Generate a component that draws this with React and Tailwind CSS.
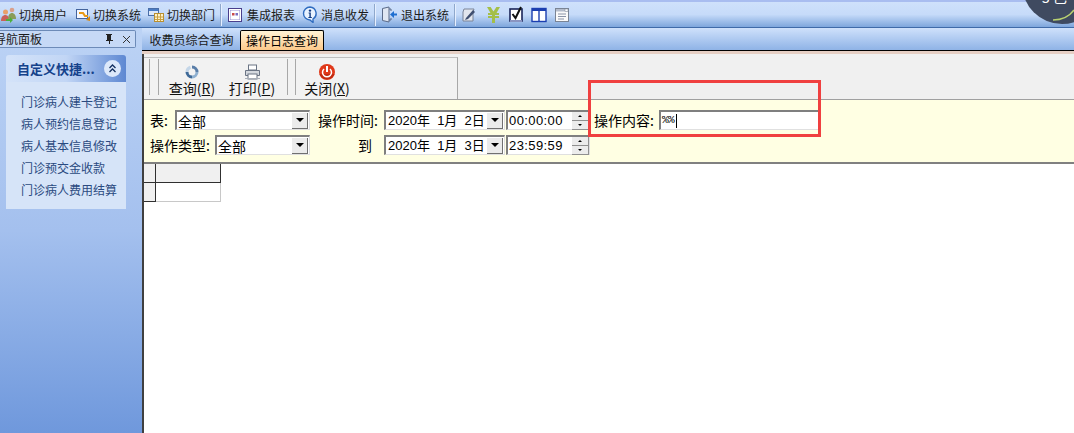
import React from "react";

const font = { fontFamily: '"Noto Sans CJK SC", "Liberation Sans", sans-serif' };

const Users = () => (
  <svg width="16" height="18" viewBox="0 0 16 18"><circle cx="4.500" cy="6" r="2.500" fill="#e8a06a"/><circle cx="11" cy="4" r="2.300" fill="#d9a08c"/><path d="M0 15c0-4 2-6 4.500-6S8 11 8 15z" fill="#c9605a"/><path d="M7 13c0-4 2-6 4-6s4 2 4 6z" fill="#8a9c5a"/><path d="M5 13h4v-2l3 3-3 3v-2H5z" fill="#4caf3c"/></svg>
);
const SwitchSys = () => (
  <svg width="16" height="16" viewBox="0 0 16 16"><rect x="1.500" y="2.500" width="11" height="9" fill="#f5f8ff" stroke="#44649c"/><path d="M4 6h4l2 3h3" fill="none" stroke="#e89a18" strokeWidth="2.200"/><path d="M11 13l4-4v5z" fill="#d88a10"/></svg>
);
const Dept = () => (
  <svg width="17" height="16" viewBox="0 0 17 16"><rect x="0.500" y="1.500" width="10" height="7" fill="#dce8fa" stroke="#4a6ea8"/><rect x="1" y="2" width="9" height="2" fill="#4a7cc4"/><rect x="6.500" y="6.500" width="9" height="8" fill="#fff2c8" stroke="#b98f30"/><path d="M9.500 7v7M12.500 7v7M7 10h8M7 12.500h8" stroke="#c9a040"/></svg>
);
const Report = () => (
  <svg width="16" height="16" viewBox="0 0 16 16"><rect x="1.500" y="1.500" width="13" height="13" fill="#fff" stroke="#4a3f8c"/><path d="M3.500 3.500h9M3.500 12.500h9M3.500 3.500v9M12.500 3.500v9" stroke="#9a8fd0" strokeDasharray="1 1"/><rect x="5" y="6" width="2.500" height="2.500" fill="#c94a4a"/><rect x="8.500" y="6" width="2.500" height="2.500" fill="#7a6cc0"/></svg>
);
const Info = () => (
  <svg width="16" height="17" viewBox="0 0 16 17"><path d="M8 1a6.500 6.500 0 1 0 0 13l3 2.500V13A6.500 6.500 0 0 0 8 1z" fill="#e8f2ff" stroke="#2f6cc0" strokeWidth="1.400"/><circle cx="8" cy="4.600" r="1.200" fill="#123a80"/><path d="M6.600 6.600h2.200v4.400h1v1H6.400v-1h1V7.600h-.8z" fill="#123a80"/></svg>
);
const Logout = () => (
  <svg width="17" height="17" viewBox="0 0 17 17"><path d="M1.500 2.500L8 1v15l-6.500-1.500z" fill="#dfe6f2" stroke="#5a6a88"/><path d="M8 3h2v2M8 14h2v-2" fill="none" stroke="#5a6a88"/><path d="M16 7.500h-3V5l-4 3.500 4 3.500V9.500h3z" fill="#1f6fd0"/></svg>
);
const Note = () => (
  <svg width="16" height="16" viewBox="0 0 16 16"><path d="M3 2h10l-1 3v9H2V5z" fill="#e2e6ee" stroke="#7a8498"/><path d="M5 11l7-8 2 2-7 7-3 1z" fill="#3f4f70"/></svg>
);
const Yen = () => (
  <svg width="13" height="16" viewBox="0 0 13 16"><path d="M0 0h3.600l2.900 4.500L9.400 0H13L9.500 6H12v2H8v1h4v2H8v5H5v-5H1V9h4V8H1V6h2.500z" fill="#a4bf48"/></svg>
);
const Check = () => (
  <svg width="15" height="17" viewBox="0 0 15 17"><rect x="1" y="3" width="12" height="12" fill="#fff" stroke="#1a2458" strokeWidth="1.600"/><rect x="1" y="14" width="12" height="2" fill="#8a94c0"/><path d="M3.500 8l3 4L12 1" fill="none" stroke="#101010" strokeWidth="2"/></svg>
);
const Columns = () => (
  <svg width="16" height="16" viewBox="0 0 16 16"><rect x="1" y="1.500" width="14" height="13" fill="#fff" stroke="#1c3fb0" strokeWidth="1.400"/><rect x="1" y="1" width="14" height="3" fill="#1c3fb0"/><path d="M8 2v12" stroke="#1c3fb0" strokeWidth="1.400"/></svg>
);
const Window = () => (
  <svg width="16" height="16" viewBox="0 0 16 16"><rect x="1.500" y="1.500" width="13" height="13" fill="#fafafa" stroke="#7a8494"/><rect x="2" y="2" width="12" height="2.500" fill="#b4bccb"/><path d="M4 7h8M4 9.500h8M4 12h6" stroke="#8a94a8"/><rect x="11" y="2" width="3" height="2.500" fill="#fff" stroke="#7a8494" strokeWidth=".5"/></svg>
);
const Refresh = () => (
  <svg width="16" height="16" viewBox="0 0 16 16"><path d="M8 1.500A6.500 6.500 0 0 1 14.500 8h-3A3.500 3.500 0 0 0 8 4.500z" fill="#5a7ea8"/><path d="M14.500 8A6.500 6.500 0 0 1 8 14.500v-3A3.500 3.500 0 0 0 11.500 8z" fill="#8fb0d0"/><path d="M8 14.500A6.500 6.500 0 0 1 1.500 8h3A3.500 3.500 0 0 0 8 11.500z" fill="#3f6a98"/><path d="M1.500 8A6.500 6.500 0 0 1 6 1.800l1 2.900A3.500 3.500 0 0 0 4.500 8z" fill="#c4d6e8"/></svg>
);
const Printer = () => (
  <svg width="17" height="16" viewBox="0 0 17 16"><rect x="4.500" y="1" width="8" height="5" fill="#fff" stroke="#6a7484"/><path d="M1.500 6.500h14v5h-14z" fill="#d4d8de" stroke="#6a7484"/><rect x="4" y="10" width="9" height="5" fill="#fff" stroke="#6a7484"/><path d="M1 14.500h15" stroke="#a8aeb8"/></svg>
);
const Power = () => (
  <svg width="16" height="16" viewBox="0 0 16 16"><circle cx="8" cy="8" r="8" fill="#e0391a"/><path d="M0.500 10a8 8 0 0 0 15 0z" fill="#c22a10"/><path d="M5 5a4.500 4.500 0 1 0 6 0" fill="none" stroke="#fff" strokeWidth="1.500"/><path d="M8 2v6" stroke="#fff" strokeWidth="2"/></svg>
);

const Sep = () => <div className="w-px h-[22px] bg-[#8fa8cc] border-r border-[#e6efff] box-content mx-[5px]" />;

const TopItem = ({ icon, label, gap = "gap-[2px]" }) => (
  <div className={`flex items-center h-full text-[12px] text-[#1c1c1c] whitespace-nowrap ${gap}`}>
    {icon}
    <span>{label}</span>
  </div>
);

const Arrow = () => (
  <div className="w-[0] h-[0] border-l-[4px] border-r-[4px] border-t-[4px] border-l-transparent border-r-transparent border-t-black" />
);

const Field = ({ className, children }) => (
  <div className={`flex items-center h-[20px] bg-white border-t-2 border-l-2 border-[#7f7f7f] border-b border-r border-b-[#e0e0e0] border-r-[#e0e0e0] ${className}`}>
    {children}
  </div>
);

const DropBtn = () => (
  <div className="w-[16px] h-[16px] mr-[1px] flex items-center justify-center bg-[#ebebeb] border-r border-b border-[#707070] shrink-0">
    <Arrow />
  </div>
);

const SelectBox = ({ className, text }) => (
  <Field className={className}>
    <span className="flex-1 pl-[1px] text-[14px] leading-none text-black whitespace-pre">{text}</span>
    <DropBtn />
  </Field>
);

const DateBox = ({ text }) => (
  <Field className="w-[121px]">
    <span className="flex-1 pl-[2px] text-[13px] leading-none text-black whitespace-pre [font-family:'Liberation_Sans','Noto_Sans_CJK_SC',sans-serif]">{text}</span>
    <DropBtn />
  </Field>
);

const Spin = () => (
  <div className="flex flex-col w-[17px] h-[18px] shrink-0">
    <div className="flex-1 bg-[#ececec] border-r border-b border-[#909090] flex items-center justify-center">
      <div className="w-0 h-0 border-l-[2px] border-r-[2px] border-b-[2px] border-l-transparent border-r-transparent border-b-black" />
    </div>
    <div className="flex-1 bg-[#ececec] border-r border-b border-[#909090] flex items-center justify-center">
      <div className="w-0 h-0 border-l-[2px] border-r-[2px] border-t-[2px] border-l-transparent border-r-transparent border-t-black" />
    </div>
  </div>
);

const TimeBox = ({ text }) => (
  <Field className="w-[84px] ml-[1px]">
    <span className="flex-1 pl-[1px] text-[13px] leading-none text-black tracking-[0.4px] [font-family:'Liberation_Sans',sans-serif]">{text}</span>
    <Spin />
  </Field>
);

const Tool = ({ icon, label, k, className }) => (
  <div className={`flex flex-col items-center w-[50px] text-[14px] leading-[16px] text-[#111] whitespace-nowrap ${className}`}>
    <div className="h-[16px] flex items-center">{icon}</div>
    <span>{label}(<u>{k}</u>)</span>
  </div>
);

const VLine = ({ className }) => <div className={`w-px h-[36px] mt-[1px] bg-[#a8a8a8] shrink-0 ${className}`} />;

const links = ["门诊病人建卡登记", "病人预约信息登记", "病人基本信息修改", "门诊预交金收款", "门诊病人费用结算"];

export default function App() {
  return (
    <div className="w-[1074px] h-[433px] overflow-hidden relative bg-white flex flex-col" style={font}>
      {/* top toolbar */}
      <div className="h-[28px] shrink-0 flex items-center pl-[1px] border-b border-[#3f6aa8] border-t-2 border-t-[#a9bdf0] bg-gradient-to-b from-[#cfe1fb] via-[#c6dbf9] to-[#7ea6dc]">
        <TopItem icon={<Users />} label="切换用户" />
        <div className="w-[8px]" />
        <TopItem icon={<SwitchSys />} label="切换系统" />
        <div className="w-[7px]" />
        <TopItem icon={<Dept />} label="切换部门" />
        <Sep />
        <TopItem icon={<Report />} label="集成报表" gap="gap-[4px]" />
        <div className="w-[7px]" />
        <TopItem icon={<Info />} label="消息收发" gap="gap-[3px]" />
        <Sep />
        <TopItem icon={<Logout />} label="退出系统" gap="gap-[3px]" />
        <Sep />
        <div className="flex items-center">
          <Note />
          <div className="w-[10px]" />
          <Yen />
          <div className="w-[9px]" />
          <Check />
          <div className="w-[7px]" />
          <Columns />
          <div className="w-[7px]" />
          <Window />
        </div>
      </div>

      {/* body */}
      <div className="flex-1 flex min-h-0">
        {/* sidebar */}
        <div className="w-[142px] shrink-0 flex flex-col bg-gradient-to-b from-[#bcd3f5] via-[#a4c0ee] to-[#6f98dc]">
          <div className="mt-[2px] h-[18px] w-[136px] shrink-0 flex items-center justify-between bg-[#c6d9f6] border border-l-0 border-[#6d8bb8] rounded-r-[2px] text-[12px] text-[#1a1a1a] overflow-hidden">
            <span className="whitespace-nowrap ml-[-6px]">导航面板</span>
            <span className="flex items-center gap-[9px] pr-[4px] text-[12px] leading-none">
              <svg width="8" height="10" viewBox="0 0 8 10"><path d="M2 0h5v1H6v5h2v1H5v3H4V7H1V6h1V1H1V0z" fill="#222"/></svg>
              <svg width="9" height="9" viewBox="0 0 9 9"><path d="M1 1l7 7M8 1L1 8" stroke="#333" /></svg>
            </span>
          </div>
          <div className="mt-[7px] ml-[6px] w-[120px] h-[27px] shrink-0 flex items-center justify-between rounded-t-[3px] pl-[11px] pr-[5px] bg-gradient-to-r from-[#d4e3f9] via-[#c2d6f5] to-[#5e88d2]">
            <span className="text-[13px] font-bold text-[#15428b] whitespace-nowrap">自定义快捷...</span>
            <span className="w-[17px] h-[17px] rounded-full bg-[#dce8fa] flex items-center justify-center">
              <svg width="9" height="9" viewBox="0 0 9 9" fill="none" stroke="#15315f" strokeWidth="1.300"><path d="M1.500 4l3-3 3 3M1.500 8l3-3 3 3" /></svg>
            </span>
          </div>
          <div className="ml-[6px] w-[120px] h-[127px] shrink-0 pt-[9px] pl-[15px] bg-[#d6e4f8] flex flex-col">
            {links.map((t) => (
              <div key={t} className="h-[22px] leading-[22px] text-[12px] text-[#2a4a80] whitespace-nowrap">{t}</div>
            ))}
          </div>
        </div>

        {/* main */}
        <div className="flex-1 flex flex-col min-w-0">
          {/* tabs */}
          <div className="h-[23px] shrink-0 flex items-end pl-[2px] border-b border-black bg-gradient-to-b from-[#cfe1fb] to-[#8fb3e6]">
            <div className="h-[20px] w-[95px] flex items-center justify-center text-[12px] text-[#1a1a1a] whitespace-nowrap">收费员综合查询</div>
            <div className="h-[20px] w-[84px] ml-[1px] flex items-center justify-center text-[12px] text-black whitespace-nowrap border border-b-0 border-black rounded-t-[2px] bg-gradient-to-b from-[#fff3d6] to-[#fcc98a]">操作日志查询</div>
          </div>
          <div className="h-[3px] shrink-0 bg-[#e6cfc4]" />
          <div className="flex-1 border-l-2 border-[#404040] flex flex-col min-h-0">
            {/* tool strip */}
            <div className="h-[46px] shrink-0 pt-[3px] bg-[#f0f0f0] border-b border-[#a0a0a0] flex">
              <div className="w-[314px] h-full border border-t-[#c0c0c0] border-l-0 border-r-[#a8a8a8] border-b-0 flex items-start bg-[#f2f2f2]">
                <VLine className="ml-[5px]" />
                <VLine className="ml-[8px]" />
                <Tool icon={<Refresh />} label="查询" k="R" className="ml-[8px] mt-[6px]" />
                <Tool icon={<Printer />} label="打印" k="P" className="ml-[10px] mt-[6px]" />
                <VLine className="ml-[10px]" />
                <VLine className="ml-[7px]" />
                <Tool icon={<Power />} label="关闭" k="X" className="ml-[6px] mt-[6px]" />
              </div>
            </div>
            {/* filters */}
            <div className="h-[64px] shrink-0 bg-[#ffffe3] border-b-2 border-[#808080] flex flex-col gap-[5px] pt-[10px] pl-[6px] text-[14px] text-black">
              <div className="flex items-center h-[20px] whitespace-nowrap">
                <span className="w-[25px]">表:</span>
                <SelectBox className="w-[135px]" text="全部" />
                <span className="w-[74px] pl-[8px]">操作时间:</span>
                <DateBox text="2020年  1月  2日" />
                <TimeBox text="00:00:00" />
                <span className="w-[69px] pl-[4px]">操作内容:</span>
                <Field className="w-[161px]">
                  <span className="pl-[1px] text-[11px] leading-none tracking-[-0.5px] [font-family:'Liberation_Mono',monospace]">%%</span>
                  <span className="w-px h-[14px] ml-[2px] bg-black" />
                </Field>
              </div>
              <div className="flex items-center h-[20px] whitespace-nowrap">
                <span className="w-[65px]">操作类型:</span>
                <SelectBox className="w-[95px]" text="全部" />
                <span className="w-[74px] pl-[48px]">到</span>
                <DateBox text="2020年  1月  3日" />
                <TimeBox text="23:59:59" />
              </div>
            </div>
            {/* grid */}
            <div className="flex-1 bg-white">
              <div className="grid grid-cols-[12px_65px] grid-rows-[19px_19px] w-[77px]">
                <div className="bg-[#f0f0f0] border-r border-b border-[#303030]" />
                <div className="bg-[#f0f0f0] border-r border-b border-[#303030]" />
                <div className="bg-[#f0f0f0] border-r border-b border-[#303030]" />
                <div className="bg-white border-r border-b border-[#c8c8c8]" />
              </div>
            </div>
          </div>
        </div>
      </div>

      {/* badge in the corner */}
      <div className="absolute left-[1022px] top-[-56px] w-[80px] h-[80px] rounded-full bg-[#3f4a60] overflow-hidden">
        <span className="absolute left-[20px] top-[46px] text-[14px] leading-[14px] text-white whitespace-nowrap">5 已</span>
        <svg className="absolute left-0 top-0" width="80" height="80" viewBox="0 0 80 80"><path d="M31 76c8 0 16-3 21-10" fill="none" stroke="#b8d070" strokeWidth="1.500"/></svg>
      </div>

      {/* red annotation */}
      <div className="absolute left-[588px] top-[80px] w-[233px] h-[57px] border-[3px] border-[#f04040] pointer-events-none" />
    </div>
  );
}
